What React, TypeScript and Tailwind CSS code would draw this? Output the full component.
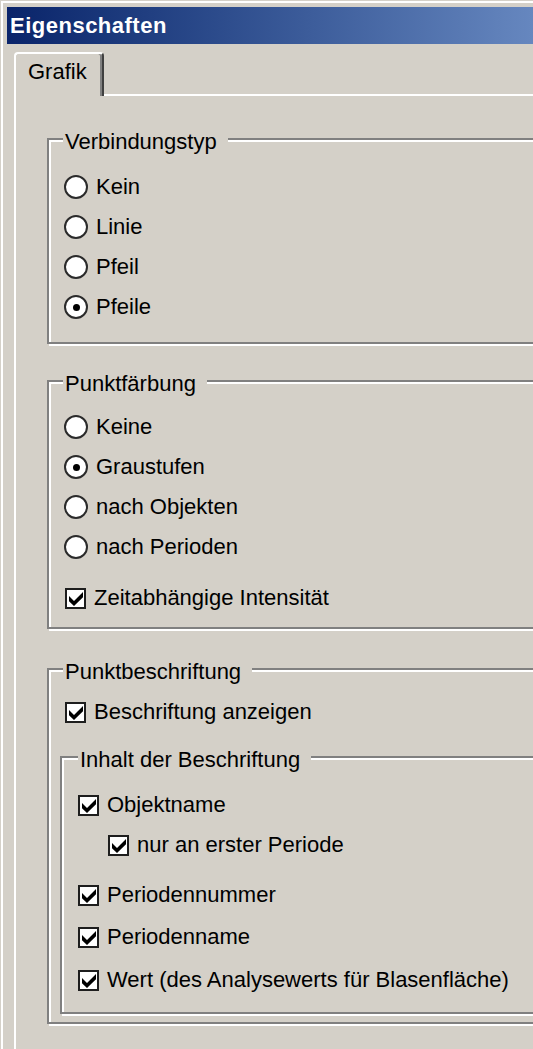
import React from "react";

type BoxProps = {
  label: string;
  className?: string;
  labelLeft?: string;
  children?: React.ReactNode;
};

const GroupBox: React.FC<BoxProps> = ({ label, className = "", labelLeft = "left-[14px]", children }) => (
  <div className={`relative border-2 border-[#808080] shadow-[inset_2px_2px_0_#fff,2px_2px_0_#fff] ${className}`}>
    <span className={`absolute -top-[11px] ${labelLeft} bg-[#d4d0c8] pl-[2px] pr-[11px] leading-[26px]`}>{label}</span>
    {children}
  </div>
);

const Radio = ({ checked }: { checked?: boolean }) => (
  <span className="flex h-[24px] w-[24px] shrink-0 items-center justify-center rounded-full border-2 border-[#2b2b2b] bg-white">
    {checked && <span className="h-[7px] w-[7px] rounded-full bg-black" />}
  </span>
);

const CheckBox = () => (
  <span className="flex h-[21px] w-[21px] shrink-0 items-end justify-center border-2 border-[#1e1e1e] bg-white pb-px">
    <svg width="14" height="14" viewBox="0 0 7 7">
      <polygon points="0,2 2.5,4.5 7,0 7,2.6 2.5,7 0,4.6" fill="#000" />
    </svg>
  </span>
);

const RadioRow = ({ label, checked }: { label: string; checked?: boolean }) => (
  <div className="flex h-[40px] items-center gap-[8px]">
    <Radio checked={checked} />
    <span className="leading-[26px]">{label}</span>
  </div>
);

const CheckRow = ({ label, className = "" }: { label: string; className?: string }) => (
  <div className={`flex h-[40px] items-center gap-[8px] ${className}`}>
    <CheckBox />
    <span className="whitespace-nowrap leading-[26px]">{label}</span>
  </div>
);

export default function App() {
  return (
    <div className="h-[1049px] w-[533px] overflow-hidden bg-[#d4d0c8] pl-px pt-px font-['Liberation_Sans',Arial,sans-serif] text-[22px] text-black">
      <div className="h-full border-l-2 border-t-2 border-white pl-[4px] pt-[4px]">
        {/* title bar */}
        <div className="flex h-[37px] items-center bg-linear-to-r from-[#0a246a] to-[#6687bf] pl-[3px] text-[22px] font-bold tracking-[0.5px] text-white">
          Eigenschaften
        </div>

        <div className="ml-[7px] mt-[8px] w-[560px]">
          {/* tab strip */}
          <div className="flex items-end">
            <div className="h-[44px] w-[90px] rounded-t-[4px] border-l-2 border-r-2 border-t-2 border-l-white border-r-[#404040] border-t-white pl-[12px] pt-[5px] leading-[26px] shadow-[inset_-2px_0_0_#808080]">
              Grafik
            </div>
            <div className="h-[2px] flex-1 bg-white" />
          </div>

          {/* tab page */}
          <div className="h-[960px] border-l-2 border-white pl-[31px] pt-[42px]">
            <GroupBox label="Verbindungstyp" className="h-[206px] w-[500px] pl-[15px] pt-[27px]">
              <RadioRow label="Kein" />
              <RadioRow label="Linie" />
              <RadioRow label="Pfeil" />
              <RadioRow label="Pfeile" checked />
            </GroupBox>

            <GroupBox label="Punktfärbung" className="mt-[36px] h-[249px] w-[500px] pl-[15px] pt-[25px]">
              <RadioRow label="Keine" />
              <RadioRow label="Graustufen" checked />
              <RadioRow label="nach Objekten" />
              <RadioRow label="nach Perioden" />
              <CheckRow label="Zeitabhängige Intensität" className="ml-px mt-[11px]" />
            </GroupBox>

            <GroupBox label="Punktbeschriftung" className="mt-[39px] h-[356px] w-[500px] pl-[11px] pt-[22px]">
              <CheckRow label="Beschriftung anzeigen" className="ml-[5px]" />
              <GroupBox
                label="Inhalt der Beschriftung"
                labelLeft="left-[16px]"
                className="mt-[24px] h-[258px] w-[480px] pl-[16px] pt-[27px]"
              >
                <CheckRow label="Objektname" />
                <CheckRow label="nur an erster Periode" className="ml-[30px]" />
                <CheckRow label="Periodennummer" className="mt-[10px]" />
                <CheckRow label="Periodenname" className="mt-[2px]" />
                <CheckRow label="Wert (des Analysewerts für Blasenfläche)" className="mt-[3px]" />
              </GroupBox>
            </GroupBox>
          </div>
        </div>
      </div>
    </div>
  );
}
